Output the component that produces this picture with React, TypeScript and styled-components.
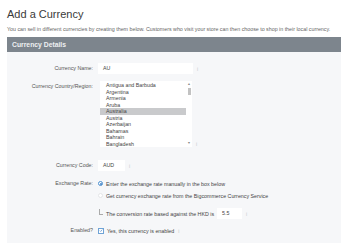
import React from 'react';
import styled, { createGlobalStyle } from 'styled-components';

const GlobalStyle = createGlobalStyle`
  body {
    margin: 0;
    background: #ffffff;
    font-family: Arial, "Liberation Sans", sans-serif;
    color: #333;
  }
`;

const Page = styled.div`
  width: 341px;
  height: 243px;
  overflow: hidden;
  padding-left: 7px;
  box-sizing: border-box;
`;

const Title = styled.h1`
  margin: 0;
  padding-top: 7px;
  font-size: 11px;
  font-weight: normal;
  color: #3a3a3a;
  line-height: 14px;
`;

const Intro = styled.p`
  margin: 5px 0 0;
  font-size: 5.3px;
  line-height: 7px;
  color: #666;
  white-space: nowrap;
`;

const SectionBar = styled.div`
  margin-top: 4px;
  height: 15px;
  background: #7d858d;
  color: #eef0f2;
  font-size: 6.8px;
  font-weight: bold;
  line-height: 15px;
  padding-left: 5px;
`;

const Panel = styled.div`
  background: #f6f7f9;
  padding-top: 11px;
  height: 200px;
  display: flex;
  flex-direction: column;
`;

const Row = styled.div<{ $top?: number }>`
  display: grid;
  grid-template-columns: 86px 1fr;
  column-gap: 5px;
  align-items: start;
  margin-top: ${(p) => p.$top ?? 0}px;
  font-size: 5.3px;
`;

const Label = styled.div`
  text-align: right;
  color: #555;
  line-height: 11px;
`;

const Field = styled.div<{ $end?: boolean }>`
  display: flex;
  align-items: ${(p) => (p.$end ? 'flex-end' : 'center')};
  gap: 3px;
  white-space: nowrap;
`;

const TextBox = styled.div<{ $w: number }>`
  width: ${(p) => p.$w}px;
  height: 11px;
  background: #fff;
  box-sizing: border-box;
  padding-left: 5px;
  line-height: 11px;
  color: #444;
`;

const Help = styled.span`
  color: #c5c8cc;
  font-size: 5px;
  margin-left: 1px;
`;

const ListBox = styled.div`
  width: 92px;
  height: 66px;
  background: #fff;
  margin-left: 2px;
  display: flex;
  box-sizing: border-box;
  padding: 1px 0;
`;

const Options = styled.div`
  flex: 1;
`;

const Option = styled.div<{ $sel?: boolean }>`
  height: 6.5px;
  line-height: 6.5px;
  padding-left: 6px;
  color: #444;
  background: ${(p) => (p.$sel ? '#c9cacc' : 'transparent')};
  white-space: nowrap;
`;

const Scroll = styled.div`
  width: 6px;
  display: flex;
  flex-direction: column;
  align-items: center;
  color: #888;
  font-size: 3.5px;
`;

const Thumb = styled.div`
  width: 3px;
  height: 7px;
  background: #c2c2c2;
  margin-top: 1px;
`;

const Arrow = styled.div`
  line-height: 5px;
`;

const Spacer = styled.div`
  flex: 1;
`;

const Choices = styled.div`
  display: flex;
  flex-direction: column;
`;

const Choice = styled.div<{ $h?: number }>`
  display: flex;
  align-items: center;
  height: ${(p) => p.$h ?? 11}px;
  gap: 3px;
  color: #444;
  white-space: nowrap;
`;

const Radio = styled.span<{ $on?: boolean }>`
  width: 5px;
  height: 5px;
  border-radius: 50%;
  box-sizing: border-box;
  border: 0.7px solid ${(p) => (p.$on ? '#4a8fd0' : '#e4e6e8')};
  background: #fff;
  display: flex;
  align-items: center;
  justify-content: center;
  &::after {
    content: '';
    width: 2px;
    height: 2px;
    border-radius: 50%;
    background: ${(p) => (p.$on ? '#3d7fc4' : 'transparent')};
  }
`;

const Indent = styled.div`
  display: flex;
  align-items: flex-end;
  margin-top: 6px;
  gap: 3px;
  color: #444;
`;

const Elbow = styled.span`
  width: 3px;
  height: 5px;
  border-left: 0.7px solid #aaa;
  border-bottom: 0.7px solid #aaa;
  margin-left: 1px;
  margin-bottom: 4px;
`;

const Check = styled.span`
  width: 6px;
  height: 6px;
  box-sizing: border-box;
  border: 0.7px solid #6fa3d6;
  background: #fff;
  display: flex;
  align-items: center;
  justify-content: center;
`;

const countries = [
  'Antigua and Barbuda',
  'Argentina',
  'Armenia',
  'Aruba',
  'Australia',
  'Austria',
  'Azerbaijan',
  'Bahamas',
  'Bahrain',
  'Bangladesh',
];

export default function App() {
  return (
    <>
      <GlobalStyle />
      <Page>
        <Title>Add a Currency</Title>
        <Intro>
          You can sell in different currencies by creating them below. Customers who visit your store can then choose to shop in their local currency.
        </Intro>
        <SectionBar>Currency Details</SectionBar>
        <Panel>
          <Row>
            <Label>Currency Name:</Label>
            <Field>
              <TextBox $w={95}>AU</TextBox>
              <Help>i</Help>
            </Field>
          </Row>
          <Row $top={7}>
            <Label>Currency Country/Region:</Label>
            <Field $end>
              <ListBox>
                <Options>
                  {countries.map((c) => (
                    <Option key={c} $sel={c === 'Australia'}>
                      {c}
                    </Option>
                  ))}
                </Options>
                <Scroll>
                  <Arrow>▲</Arrow>
                  <Thumb />
                  <Spacer />
                  <Arrow>▼</Arrow>
                </Scroll>
              </ListBox>
              <Help>i</Help>
            </Field>
          </Row>
          <Row $top={13}>
            <Label>Currency Code:</Label>
            <Field>
              <TextBox $w={27}>AUD</TextBox>
              <Help>i</Help>
            </Field>
          </Row>
          <Row $top={7}>
            <Label>Exchange Rate:</Label>
            <Choices>
              <Choice>
                <Radio $on />
                Enter the exchange rate manually in the box below
              </Choice>
              <Choice $h={13}>
                <Radio />
                Get currency exchange rate from the Bigcommerce Currency Service
              </Choice>
              <Indent>
                <Elbow />
                <Field>
                  The conversion rate based against the HKD is
                  <TextBox $w={25}>5.5</TextBox>
                  <Help>i</Help>
                </Field>
              </Indent>
            </Choices>
          </Row>
          <Row $top={6}>
            <Label>Enabled?</Label>
            <Choice>
              <Check>
                <svg width="5" height="5" viewBox="0 0 10 10">
                  <path d="M2 5.2 L4.2 7.4 L8.2 2.8" fill="none" stroke="#3d7fc4" strokeWidth="1.6" />
                </svg>
              </Check>
              Yes, this currency is enabled
              <Help>i</Help>
            </Choice>
          </Row>
        </Panel>
      </Page>
    </>
  );
}
